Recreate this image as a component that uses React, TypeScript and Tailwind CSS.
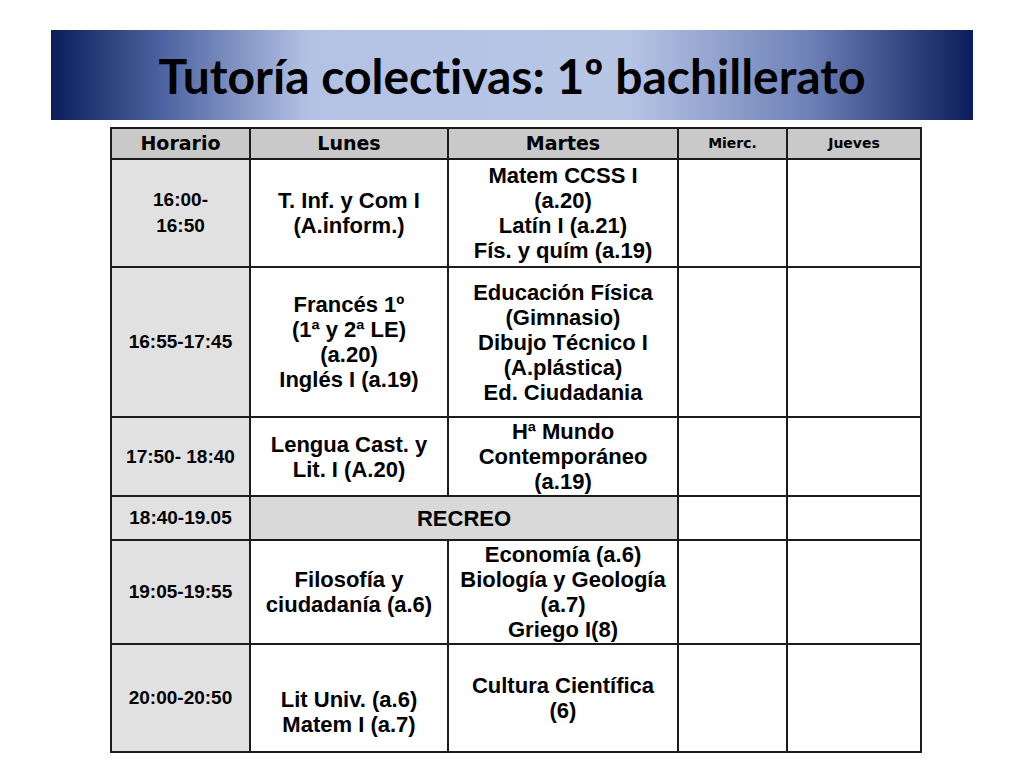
const body = "font-['Liberation_Sans',Arial,sans-serif] font-bold text-[22px] leading-[25px] text-black";
const head = "font-['DejaVu_Sans',Verdana,sans-serif] font-bold";

type Row = { time: string[]; h: string; lunes?: string[]; martes?: string[]; recreo?: boolean; lunesPad?: string };

const rows: Row[] = [
  {
    time: ["16:00-", "16:50"],
    h: "h-[108px]",
    lunes: ["T. Inf. y Com I", "(A.inform.)"],
    martes: ["Matem CCSS I", "(a.20)", "Latín I (a.21)", "Fís. y quím (a.19)"],
  },
  {
    time: ["16:55-17:45"],
    h: "h-[150px]",
    lunes: ["Francés 1º", "(1ª y 2ª LE)", "(a.20)", "Inglés I (a.19)"],
    martes: ["Educación Física", "(Gimnasio)", "Dibujo Técnico I", "(A.plástica)", "Ed. Ciudadania"],
  },
  {
    time: ["17:50- 18:40"],
    h: "h-[79px]",
    lunes: ["Lengua Cast. y", "Lit. I (A.20)"],
    martes: ["Hª Mundo", "Contemporáneo", "(a.19)"],
  },
  { time: ["18:40-19.05"], h: "h-[44px]", recreo: true },
  {
    time: ["19:05-19:55"],
    h: "h-[104px]",
    lunes: ["Filosofía y", "ciudadanía (a.6)"],
    martes: ["Economía (a.6)", "Biología y Geología", "(a.7)", "Griego I(8)"],
  },
  {
    time: ["20:00-20:50"],
    h: "h-[108px]",
    lunes: ["Lit Univ. (a.6)", "Matem I (a.7)"],
    martes: ["Cultura Científica", "(6)"],
    lunesPad: "pt-[28px]",
  },
];

const Lines = ({ lines }: { lines: string[] }) => (
  <>
    {lines.map((l, i) => (
      <div key={i} className="whitespace-nowrap">
        {l}
      </div>
    ))}
  </>
);

export default function App() {
  return (
    <div className="w-[1024px] h-[768px] bg-white overflow-hidden pt-[30px]">
      <div className="ml-[51px] w-[922px] h-[90px] flex items-center justify-center bg-[linear-gradient(90deg,#0b1d5c_0%,#4d62a0_12%,#b3c2e4_28%,#b8c6e6_62%,#6f82b8_82%,#0b1d5c_100%)]">
        <h1 className="font-['Lato','Open_Sans',sans-serif] font-bold text-[48px] leading-none text-black pt-[1px] [font-variant-ligatures:none]">
          Tutoría colectivas: 1º bachillerato
        </h1>
      </div>

      <table className="ml-[110px] mt-[7px] w-[810px] border-collapse table-fixed text-center">
        <colgroup>
          <col className="w-[139px]" />
          <col className="w-[198px]" />
          <col className="w-[230px]" />
          <col className="w-[109px]" />
          <col className="w-[134px]" />
        </colgroup>
        <thead>
          <tr className="h-[31px] bg-[#c9c9c9]">
            <th className={`border-2 border-[#1c1c1c] ${head} text-[19px]`}>Horario</th>
            <th className={`border-2 border-[#1c1c1c] ${head} text-[19px]`}>Lunes</th>
            <th className={`border-2 border-[#1c1c1c] ${head} text-[19px]`}>Martes</th>
            <th className={`border-2 border-[#1c1c1c] ${head} text-[14px]`}>Mierc.</th>
            <th className={`border-2 border-[#1c1c1c] ${head} text-[14px]`}>Jueves</th>
          </tr>
        </thead>
        <tbody>
          {rows.map((r, i) => (
            <tr key={i} className={r.h}>
              <td className="border-2 border-[#1c1c1c] bg-[#e1e1e1] font-['Liberation_Sans',Arial,sans-serif] font-bold text-[19px] leading-[26px] text-black align-middle">
                <Lines lines={r.time} />
              </td>
              {r.recreo ? (
                <td colSpan={2} className={`border-2 border-[#1c1c1c] bg-[#d9d9d9] ${body} align-middle`}>
                  RECREO
                </td>
              ) : (
                <>
                  <td className={`border-2 border-[#1c1c1c] ${body} align-middle ${r.lunesPad ?? ""}`}>
                    <Lines lines={r.lunes ?? []} />
                  </td>
                  <td className={`border-2 border-[#1c1c1c] ${body} align-middle`}>
                    <Lines lines={r.martes ?? []} />
                  </td>
                </>
              )}
              <td className="border-2 border-[#1c1c1c]" />
              <td className="border-2 border-[#1c1c1c]" />
            </tr>
          ))}
        </tbody>
      </table>
    </div>
  );
}
